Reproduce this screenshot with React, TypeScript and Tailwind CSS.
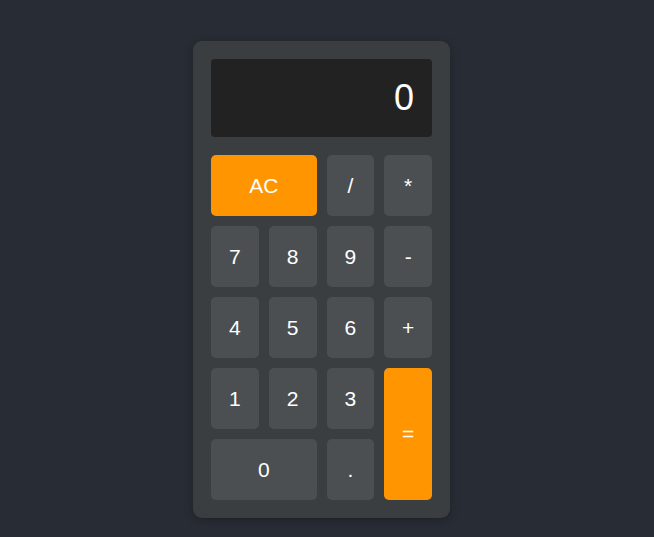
import React from "react";

const btn = "flex items-center justify-center rounded-[5px] text-[21px] text-white";
const gray = `${btn} bg-[#4b4f52]`;
const orange = `${btn} bg-[#ff9500]`;

export default function App() {
  return (
    <div
      className="min-h-[537px] w-full bg-[#282c34] flex justify-center pr-[11px] pt-[41px]"
      style={{ fontFamily: '"Liberation Sans", Arial, sans-serif' }}
    >
      <div className="w-[257px] h-[477px] bg-[#3a3e41] rounded-[9px] p-[18px] flex flex-col gap-[18px] shadow-[0_2px_8px_rgba(0,0,0,0.25)]">
        <div className="h-[78px] bg-[#222222] rounded-[4px] flex items-center justify-end pr-[18px] text-[36px] text-white">
          0
        </div>
        <div className="grid grid-cols-4 grid-rows-[repeat(5,61px)] gap-[10px]">
          <div className={`${orange} col-span-2`}>AC</div>
          <div className={gray}>/</div>
          <div className={gray}>*</div>
          <div className={gray}>7</div>
          <div className={gray}>8</div>
          <div className={gray}>9</div>
          <div className={gray}>-</div>
          <div className={gray}>4</div>
          <div className={gray}>5</div>
          <div className={gray}>6</div>
          <div className={gray}>+</div>
          <div className={gray}>1</div>
          <div className={gray}>2</div>
          <div className={gray}>3</div>
          <div className={`${orange} row-span-2`}>=</div>
          <div className={`${gray} col-span-2`}>0</div>
          <div className={gray}>.</div>
        </div>
      </div>
    </div>
  );
}
